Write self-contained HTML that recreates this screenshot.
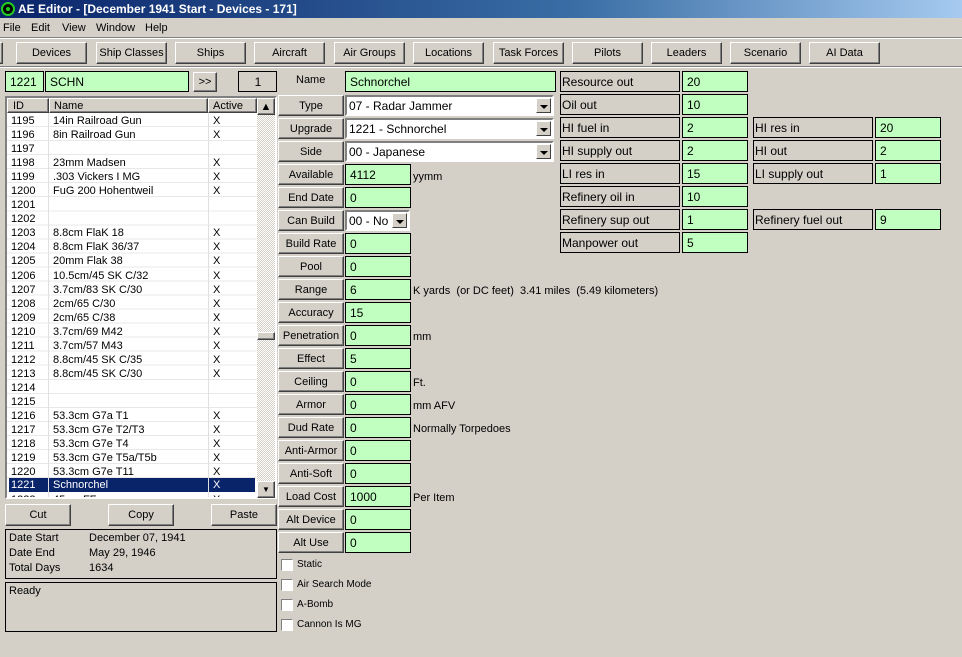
<!DOCTYPE html>
<html><head><style>
*{box-sizing:border-box;margin:0;padding:0}
body{width:962px;height:657px;background:#d4d0c8;font-family:"Liberation Sans",sans-serif;font-size:11px;color:#000;position:relative;overflow:hidden}
.a{position:absolute}
.btn{position:absolute;background:#d4d0c8;border:1px solid;border-color:#fff #404040 #404040 #fff;box-shadow:inset -1px -1px 0 #808080;text-align:center;font-size:11px;display:flex;align-items:center;justify-content:center}
.g{position:absolute;background:#c0ffc0;border:1px solid #000;padding-left:4px;display:flex;align-items:center;font-size:12px}
.lb{position:absolute;background:#d4d0c8;border:1px solid #000;display:flex;align-items:center;font-size:12px;padding-left:1px}
.w{position:absolute;background:#fff;border:2px solid;border-color:#808080 #fff #fff #808080;display:flex;align-items:center;padding-left:2px;font-size:12px}
.dd{position:absolute;right:1px;top:1px;bottom:1px;width:15px;background:#d4d0c8;border:1px solid;border-color:#fff #404040 #404040 #fff}
.dd:after{content:"";position:absolute;left:3px;top:6px;border-left:4px solid transparent;border-right:4px solid transparent;border-top:4px solid #000}
.t{position:absolute;font-size:11px}
.row{position:absolute;left:7px;width:249px;height:14px;font-size:11px}
.row span{position:absolute;top:0}
.cb{position:absolute;left:281px;width:12px;height:12px;background:#fff;border:1px solid;border-color:#808080 #fff #fff #808080}
</style></head><body>
<div class="a" style="left:0;top:0;width:962px;height:18px;background:linear-gradient(90deg,#0a246a,#3a6ea5 60%,#a6caf0)"></div>
<div class="a" style="left:1px;top:2px;width:14px;height:14px;border-radius:50%;background:#000;border:2px solid #2c2"></div>
<div class="a" style="left:6px;top:7px;width:4px;height:4px;border-radius:50%;background:#2c2"></div>
<div class="t" style="left:18px;top:2px;color:#fff;font-weight:bold;font-size:12px">AE Editor - [December 1941 Start - Devices - 171]</div>
<div class="t" style="left:3px;top:22px;font-size:11px">File</div>
<div class="t" style="left:31px;top:22px">Edit</div>
<div class="t" style="left:62px;top:22px">View</div>
<div class="t" style="left:96px;top:22px">Window</div>
<div class="t" style="left:145px;top:22px">Help</div>
<div class="a" style="left:0;top:37px;width:962px;height:1px;background:#808080"></div><div class="a" style="left:0;top:38px;width:962px;height:1px;background:#fff"></div>
<div class="a" style="left:0;top:66px;width:962px;height:1px;background:#808080"></div><div class="a" style="left:0;top:67px;width:962px;height:1px;background:#fff"></div>
<div class="btn" style="left:-2px;top:42px;width:5px;height:22px"></div>
<div class="btn" style="left:16px;top:42px;width:71px;height:22px">Devices</div>
<div class="btn" style="left:96px;top:42px;width:71px;height:22px">Ship Classes</div>
<div class="btn" style="left:175px;top:42px;width:71px;height:22px">Ships</div>
<div class="btn" style="left:254px;top:42px;width:71px;height:22px">Aircraft</div>
<div class="btn" style="left:334px;top:42px;width:71px;height:22px">Air Groups</div>
<div class="btn" style="left:413px;top:42px;width:71px;height:22px">Locations</div>
<div class="btn" style="left:493px;top:42px;width:71px;height:22px">Task Forces</div>
<div class="btn" style="left:572px;top:42px;width:71px;height:22px">Pilots</div>
<div class="btn" style="left:651px;top:42px;width:71px;height:22px">Leaders</div>
<div class="btn" style="left:730px;top:42px;width:71px;height:22px">Scenario</div>
<div class="btn" style="left:809px;top:42px;width:71px;height:22px">AI Data</div>

<div class="g" style="left:5px;top:71px;width:39px;height:21px">1221</div>
<div class="g" style="left:45px;top:71px;width:144px;height:21px">SCHN</div>
<div class="btn" style="left:193px;top:72px;width:24px;height:20px">&gt;&gt;</div>
<div class="lb" style="left:238px;top:71px;width:39px;height:21px;justify-content:center">1</div>

<div class="a" style="left:5px;top:96px;width:272px;height:403px;background:#fff;border:2px solid;border-color:#808080 #fff #fff #808080"></div>
<div class="btn" style="left:7px;top:98px;width:42px;height:15px;justify-content:flex-start;padding-left:5px">ID</div>
<div class="btn" style="left:49px;top:98px;width:159px;height:15px;justify-content:flex-start;padding-left:4px">Name</div>
<div class="btn" style="left:208px;top:98px;width:49px;height:15px;justify-content:flex-start;padding-left:4px">Active</div>
<div class="a" style="left:257px;top:98px;width:18px;height:399px;background:repeating-conic-gradient(#fff 0 25%,#d4d0c8 0 50%) 0 0/2px 2px"></div>
<div class="btn" style="left:257px;top:98px;width:18px;height:17px">▲</div>
<div class="btn" style="left:257px;top:332px;width:18px;height:8px"></div>
<div class="btn" style="left:257px;top:481px;width:18px;height:17px"><span style="font-size:8px">▼</span></div>
<div class="a" style="left:7px;top:113px;width:250px;height:384px;overflow:hidden">
<div style="position:relative;font-size:11px;line-height:14.04px">
<div style="position:absolute;left:4px;top:1px">1195<br>1196<br>1197<br>1198<br>1199<br>1200<br>1201<br>1202<br>1203<br>1204<br>1205<br>1206<br>1207<br>1208<br>1209<br>1210<br>1211<br>1212<br>1213<br>1214<br>1215<br>1216<br>1217<br>1218<br>1219<br>1220<br><br>1222</div>
<div style="position:absolute;left:46px;top:1px;white-space:nowrap">14in Railroad Gun<br>8in Railroad Gun<br>&nbsp;<br>23mm Madsen<br>.303 Vickers I MG<br>FuG 200 Hohentweil<br>&nbsp;<br>&nbsp;<br>8.8cm FlaK 18<br>8.8cm FlaK 36/37<br>20mm Flak 38<br>10.5cm/45 SK C/32<br>3.7cm/83 SK C/30<br>2cm/65 C/30<br>2cm/65 C/38<br>3.7cm/69 M42<br>3.7cm/57 M43<br>8.8cm/45 SK C/35<br>8.8cm/45 SK C/30<br>&nbsp;<br>&nbsp;<br>53.3cm G7a T1<br>53.3cm G7e T2/T3<br>53.3cm G7e T4<br>53.3cm G7e T5a/T5b<br>53.3cm G7e T11<br>&nbsp;<br>45cm FF</div>
<div style="position:absolute;left:206px;top:1px">X<br>X<br>&nbsp;<br>X<br>X<br>X<br>&nbsp;<br>&nbsp;<br>X<br>X<br>X<br>X<br>X<br>X<br>X<br>X<br>X<br>X<br>X<br>&nbsp;<br>&nbsp;<br>X<br>X<br>X<br>X<br>X<br>&nbsp;<br>X</div>
</div>
<div style="position:absolute;left:0;top:0;width:250px;height:384px;background:repeating-linear-gradient(180deg,transparent 0 13.04px,#e8e8e8 13.04px 14.04px)"></div>
<div style="position:absolute;left:2px;top:365px;width:246px;height:14px;background:#0a246a;color:#fff;font-size:11px;line-height:14px"><span style="position:absolute;left:2px">1221</span><span style="position:absolute;left:44px">Schnorchel</span><span style="position:absolute;left:204px">X</span></div>
<div style="position:absolute;left:41px;top:0;width:1px;height:384px;background:#e0e0e0"></div>
<div style="position:absolute;left:201px;top:0;width:1px;height:384px;background:#e0e0e0"></div>
</div>

<div class="btn" style="left:5px;top:504px;width:66px;height:22px">Cut</div>
<div class="btn" style="left:108px;top:504px;width:66px;height:22px">Copy</div>
<div class="btn" style="left:211px;top:504px;width:66px;height:22px">Paste</div>
<div class="a" style="left:5px;top:529px;width:272px;height:50px;border:1px solid #000"></div>
<div class="t" style="left:9px;top:532px">Date Start</div><div class="t" style="left:89px;top:532px">December 07, 1941</div>
<div class="t" style="left:9px;top:547px">Date End</div><div class="t" style="left:89px;top:547px">May 29, 1946</div>
<div class="t" style="left:9px;top:562px">Total Days</div><div class="t" style="left:89px;top:562px">1634</div>
<div class="a" style="left:5px;top:582px;width:272px;height:50px;border:1px solid #000"></div>
<div class="t" style="left:9px;top:585px">Ready</div>

<div class="t" style="left:296px;top:74px;font-size:11px">Name</div>
<div class="g" style="left:345px;top:71px;width:211px;height:21px">Schnorchel</div>

<div class="btn" style="left:278px;top:95px;width:66px;height:21px">Type</div>
<div class="w" style="left:345px;top:95px;width:209px;height:21px">07 - Radar Jammer<div class="dd"></div></div>
<div class="btn" style="left:278px;top:118px;width:66px;height:21px">Upgrade</div>
<div class="w" style="left:345px;top:118px;width:209px;height:21px">1221 - Schnorchel<div class="dd"></div></div>
<div class="btn" style="left:278px;top:141px;width:66px;height:21px">Side</div>
<div class="w" style="left:345px;top:141px;width:209px;height:21px">00 - Japanese<div class="dd"></div></div>
<div class="btn" style="left:278px;top:164px;width:66px;height:21px">Available</div>
<div class="g" style="left:345px;top:164px;width:66px;height:21px">4112</div><div class="t" style="left:413px;top:171px">yymm</div>
<div class="btn" style="left:278px;top:187px;width:66px;height:21px">End Date</div>
<div class="g" style="left:345px;top:187px;width:66px;height:21px">0</div>
<div class="btn" style="left:278px;top:210px;width:66px;height:21px">Can Build</div>
<div class="w" style="left:345px;top:210px;width:65px;height:21px">00 - No<div class="dd"></div></div>
<div class="btn" style="left:278px;top:233px;width:66px;height:21px">Build Rate</div>
<div class="g" style="left:345px;top:233px;width:66px;height:21px">0</div>
<div class="btn" style="left:278px;top:256px;width:66px;height:21px">Pool</div>
<div class="g" style="left:345px;top:256px;width:66px;height:21px">0</div>
<div class="btn" style="left:278px;top:279px;width:66px;height:21px">Range</div>
<div class="g" style="left:345px;top:279px;width:66px;height:21px">6</div><div class="t" style="left:413px;top:285px">K yards &nbsp;(or DC feet) &nbsp;3.41 miles &nbsp;(5.49 kilometers)</div>
<div class="btn" style="left:278px;top:302px;width:66px;height:21px">Accuracy</div>
<div class="g" style="left:345px;top:302px;width:66px;height:21px">15</div>
<div class="btn" style="left:278px;top:325px;width:66px;height:21px">Penetration</div>
<div class="g" style="left:345px;top:325px;width:66px;height:21px">0</div><div class="t" style="left:413px;top:331px">mm</div>
<div class="btn" style="left:278px;top:348px;width:66px;height:21px">Effect</div>
<div class="g" style="left:345px;top:348px;width:66px;height:21px">5</div>
<div class="btn" style="left:278px;top:371px;width:66px;height:21px">Ceiling</div>
<div class="g" style="left:345px;top:371px;width:66px;height:21px">0</div><div class="t" style="left:413px;top:377px">Ft.</div>
<div class="btn" style="left:278px;top:394px;width:66px;height:21px">Armor</div>
<div class="g" style="left:345px;top:394px;width:66px;height:21px">0</div><div class="t" style="left:413px;top:400px">mm AFV</div>
<div class="btn" style="left:278px;top:417px;width:66px;height:21px">Dud Rate</div>
<div class="g" style="left:345px;top:417px;width:66px;height:21px">0</div><div class="t" style="left:413px;top:423px">Normally Torpedoes</div>
<div class="btn" style="left:278px;top:440px;width:66px;height:21px">Anti-Armor</div>
<div class="g" style="left:345px;top:440px;width:66px;height:21px">0</div>
<div class="btn" style="left:278px;top:463px;width:66px;height:21px">Anti-Soft</div>
<div class="g" style="left:345px;top:463px;width:66px;height:21px">0</div>
<div class="btn" style="left:278px;top:486px;width:66px;height:21px">Load Cost</div>
<div class="g" style="left:345px;top:486px;width:66px;height:21px">1000</div><div class="t" style="left:413px;top:492px">Per Item</div>
<div class="btn" style="left:278px;top:509px;width:66px;height:21px">Alt Device</div>
<div class="g" style="left:345px;top:509px;width:66px;height:21px">0</div>
<div class="btn" style="left:278px;top:532px;width:66px;height:21px">Alt Use</div>
<div class="g" style="left:345px;top:532px;width:66px;height:21px">0</div>

<div class="cb" style="top:559px"></div><div class="t" style="left:297px;top:559px;font-size:10px">Static</div>
<div class="cb" style="top:579px"></div><div class="t" style="left:297px;top:579px;font-size:10px">Air Search Mode</div>
<div class="cb" style="top:599px"></div><div class="t" style="left:297px;top:599px;font-size:10px">A-Bomb</div>
<div class="cb" style="top:619px"></div><div class="t" style="left:297px;top:619px;font-size:10px">Cannon Is MG</div>

<div class="lb" style="left:560px;top:71px;width:120px;height:21px">Resource out</div><div class="g" style="left:682px;top:71px;width:66px;height:21px">20</div>
<div class="lb" style="left:560px;top:94px;width:120px;height:21px">Oil out</div><div class="g" style="left:682px;top:94px;width:66px;height:21px">10</div>
<div class="lb" style="left:560px;top:117px;width:120px;height:21px">HI fuel in</div><div class="g" style="left:682px;top:117px;width:66px;height:21px">2</div>
<div class="lb" style="left:560px;top:140px;width:120px;height:21px">HI supply out</div><div class="g" style="left:682px;top:140px;width:66px;height:21px">2</div>
<div class="lb" style="left:560px;top:163px;width:120px;height:21px">LI res in</div><div class="g" style="left:682px;top:163px;width:66px;height:21px">15</div>
<div class="lb" style="left:560px;top:186px;width:120px;height:21px">Refinery oil in</div><div class="g" style="left:682px;top:186px;width:66px;height:21px">10</div>
<div class="lb" style="left:560px;top:209px;width:120px;height:21px">Refinery sup out</div><div class="g" style="left:682px;top:209px;width:66px;height:21px">1</div>
<div class="lb" style="left:560px;top:232px;width:120px;height:21px">Manpower out</div><div class="g" style="left:682px;top:232px;width:66px;height:21px">5</div>
<div class="lb" style="left:753px;top:117px;width:120px;height:21px">HI res in</div><div class="g" style="left:875px;top:117px;width:66px;height:21px">20</div>
<div class="lb" style="left:753px;top:140px;width:120px;height:21px">HI out</div><div class="g" style="left:875px;top:140px;width:66px;height:21px">2</div>
<div class="lb" style="left:753px;top:163px;width:120px;height:21px">LI supply out</div><div class="g" style="left:875px;top:163px;width:66px;height:21px">1</div>
<div class="lb" style="left:753px;top:209px;width:120px;height:21px">Refinery fuel out</div><div class="g" style="left:875px;top:209px;width:66px;height:21px">9</div>
</body></html>
